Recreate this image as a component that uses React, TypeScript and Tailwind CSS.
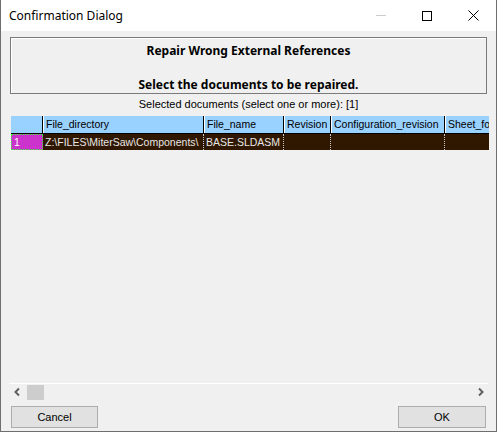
import React from 'react'

type Col = { name: string; width: number; value: string }

const columns: Col[] = [
  { name: 'File_directory', width: 161, value: 'Z:\\FILES\\MiterSaw\\Components\\' },
  { name: 'File_name', width: 80, value: 'BASE.SLDASM' },
  { name: 'Revision', width: 47, value: '' },
  { name: 'Configuration_revision', width: 114, value: '' },
  { name: 'Sheet_format', width: 60, value: '' },
]

export default function App() {
  return (
    <div className="w-[497px] h-[432px] bg-[#f0f0f0] flex flex-col border-l border-r border-b border-[#6e6e6e] overflow-hidden font-['Liberation_Sans',sans-serif]">
      {/* title bar */}
      <div className="h-[31px] bg-white flex items-center shrink-0">
        <span className="pl-[8px] text-[12px] text-black font-['Noto_Sans',sans-serif]">Confirmation Dialog</span>
        <div className="ml-auto flex items-center h-full">
          <div className="w-[46px] h-full flex items-center justify-center">
            <div className="w-[10px] h-px bg-[#cccccc]" />
          </div>
          <div className="w-[46px] h-full flex items-center justify-center">
            <div className="w-[10px] h-[10px] border border-black" />
          </div>
          <div className="w-[46px] h-full flex items-center justify-center">
            <svg width="11" height="11" viewBox="0 0 11 11">
              <path d="M0.5 0.5L10.5 10.5M10.5 0.5L0.5 10.5" stroke="#000" strokeWidth="1" />
            </svg>
          </div>
        </div>
      </div>

      <div className="flex-1 flex flex-col px-[9px] pt-[6px]">
        {/* heading box */}
        <div className="h-[57px] border border-[#7a7a7a] shadow-[inset_1px_1px_0_#ffffff] bg-[#f0f0f0] flex flex-col items-center font-['Noto_Sans',sans-serif] font-bold text-[12px] text-black leading-none">
          <div className="pt-[7px]">Repair Wrong External References</div>
          <div className="pt-[22px]">Select the documents to be repaired.</div>
        </div>

        <div className="text-center text-[11px] text-black leading-none pt-[5px] h-[22px]">
          Selected documents (select one or more): [1]
        </div>

        {/* grid */}
        <div className="ml-px w-[478px] overflow-hidden text-[10.5px] leading-none">
          <div className="flex h-[18px] bg-[#99d1ff] border-b border-black">
            <div className="w-[32px] shrink-0 border-r border-black" />
            {columns.map(c => (
              <div
                key={c.name}
                className="shrink-0 flex items-center pl-[2px] border-l border-white border-r border-r-black whitespace-nowrap overflow-hidden text-black"
                style={{ width: c.width }}
              >
                {c.name}
              </div>
            ))}
          </div>
          <div className="flex h-[16px] bg-[#301700]">
            <div className="w-[32px] shrink-0 bg-[#cc33cc] border border-dotted border-[#33ff33] text-white flex items-center pl-[2px]">1</div>
            {columns.map(c => (
              <div
                key={c.name}
                className="shrink-0 flex items-center pl-[2px] border-r border-dotted border-[#c8c8c8] whitespace-nowrap overflow-hidden text-[#e6e6e6]"
                style={{ width: c.width }}
              >
                {c.value}
              </div>
            ))}
          </div>
        </div>

        <div className="flex-1" />

        {/* horizontal scrollbar */}
        <div className="h-[17px] border-t border-white flex items-center -mx-[1px]">
          <svg width="16" height="16" viewBox="0 0 16 16" className="ml-px">
            <path d="M9 4.5L5.5 8L9 11.5" stroke="#606060" strokeWidth="2" fill="none" />
          </svg>
          <div className="ml-px w-[17px] h-[15px] bg-[#cdcdcd]" />
          <svg width="16" height="16" viewBox="0 0 16 16" className="ml-auto">
            <path d="M7 4.5L10.5 8L7 11.5" stroke="#606060" strokeWidth="2" fill="none" />
          </svg>
        </div>

        {/* buttons */}
        <div className="flex justify-between pt-[6px] pb-[3px] px-px">
          <button className="w-[87px] h-[22px] bg-[#e1e1e1] border border-[#adadad] text-[11px] text-black leading-none">Cancel</button>
          <button className="w-[88px] h-[22px] bg-[#e1e1e1] border border-[#adadad] text-[11px] text-black leading-none">OK</button>
        </div>
      </div>
    </div>
  )
}
